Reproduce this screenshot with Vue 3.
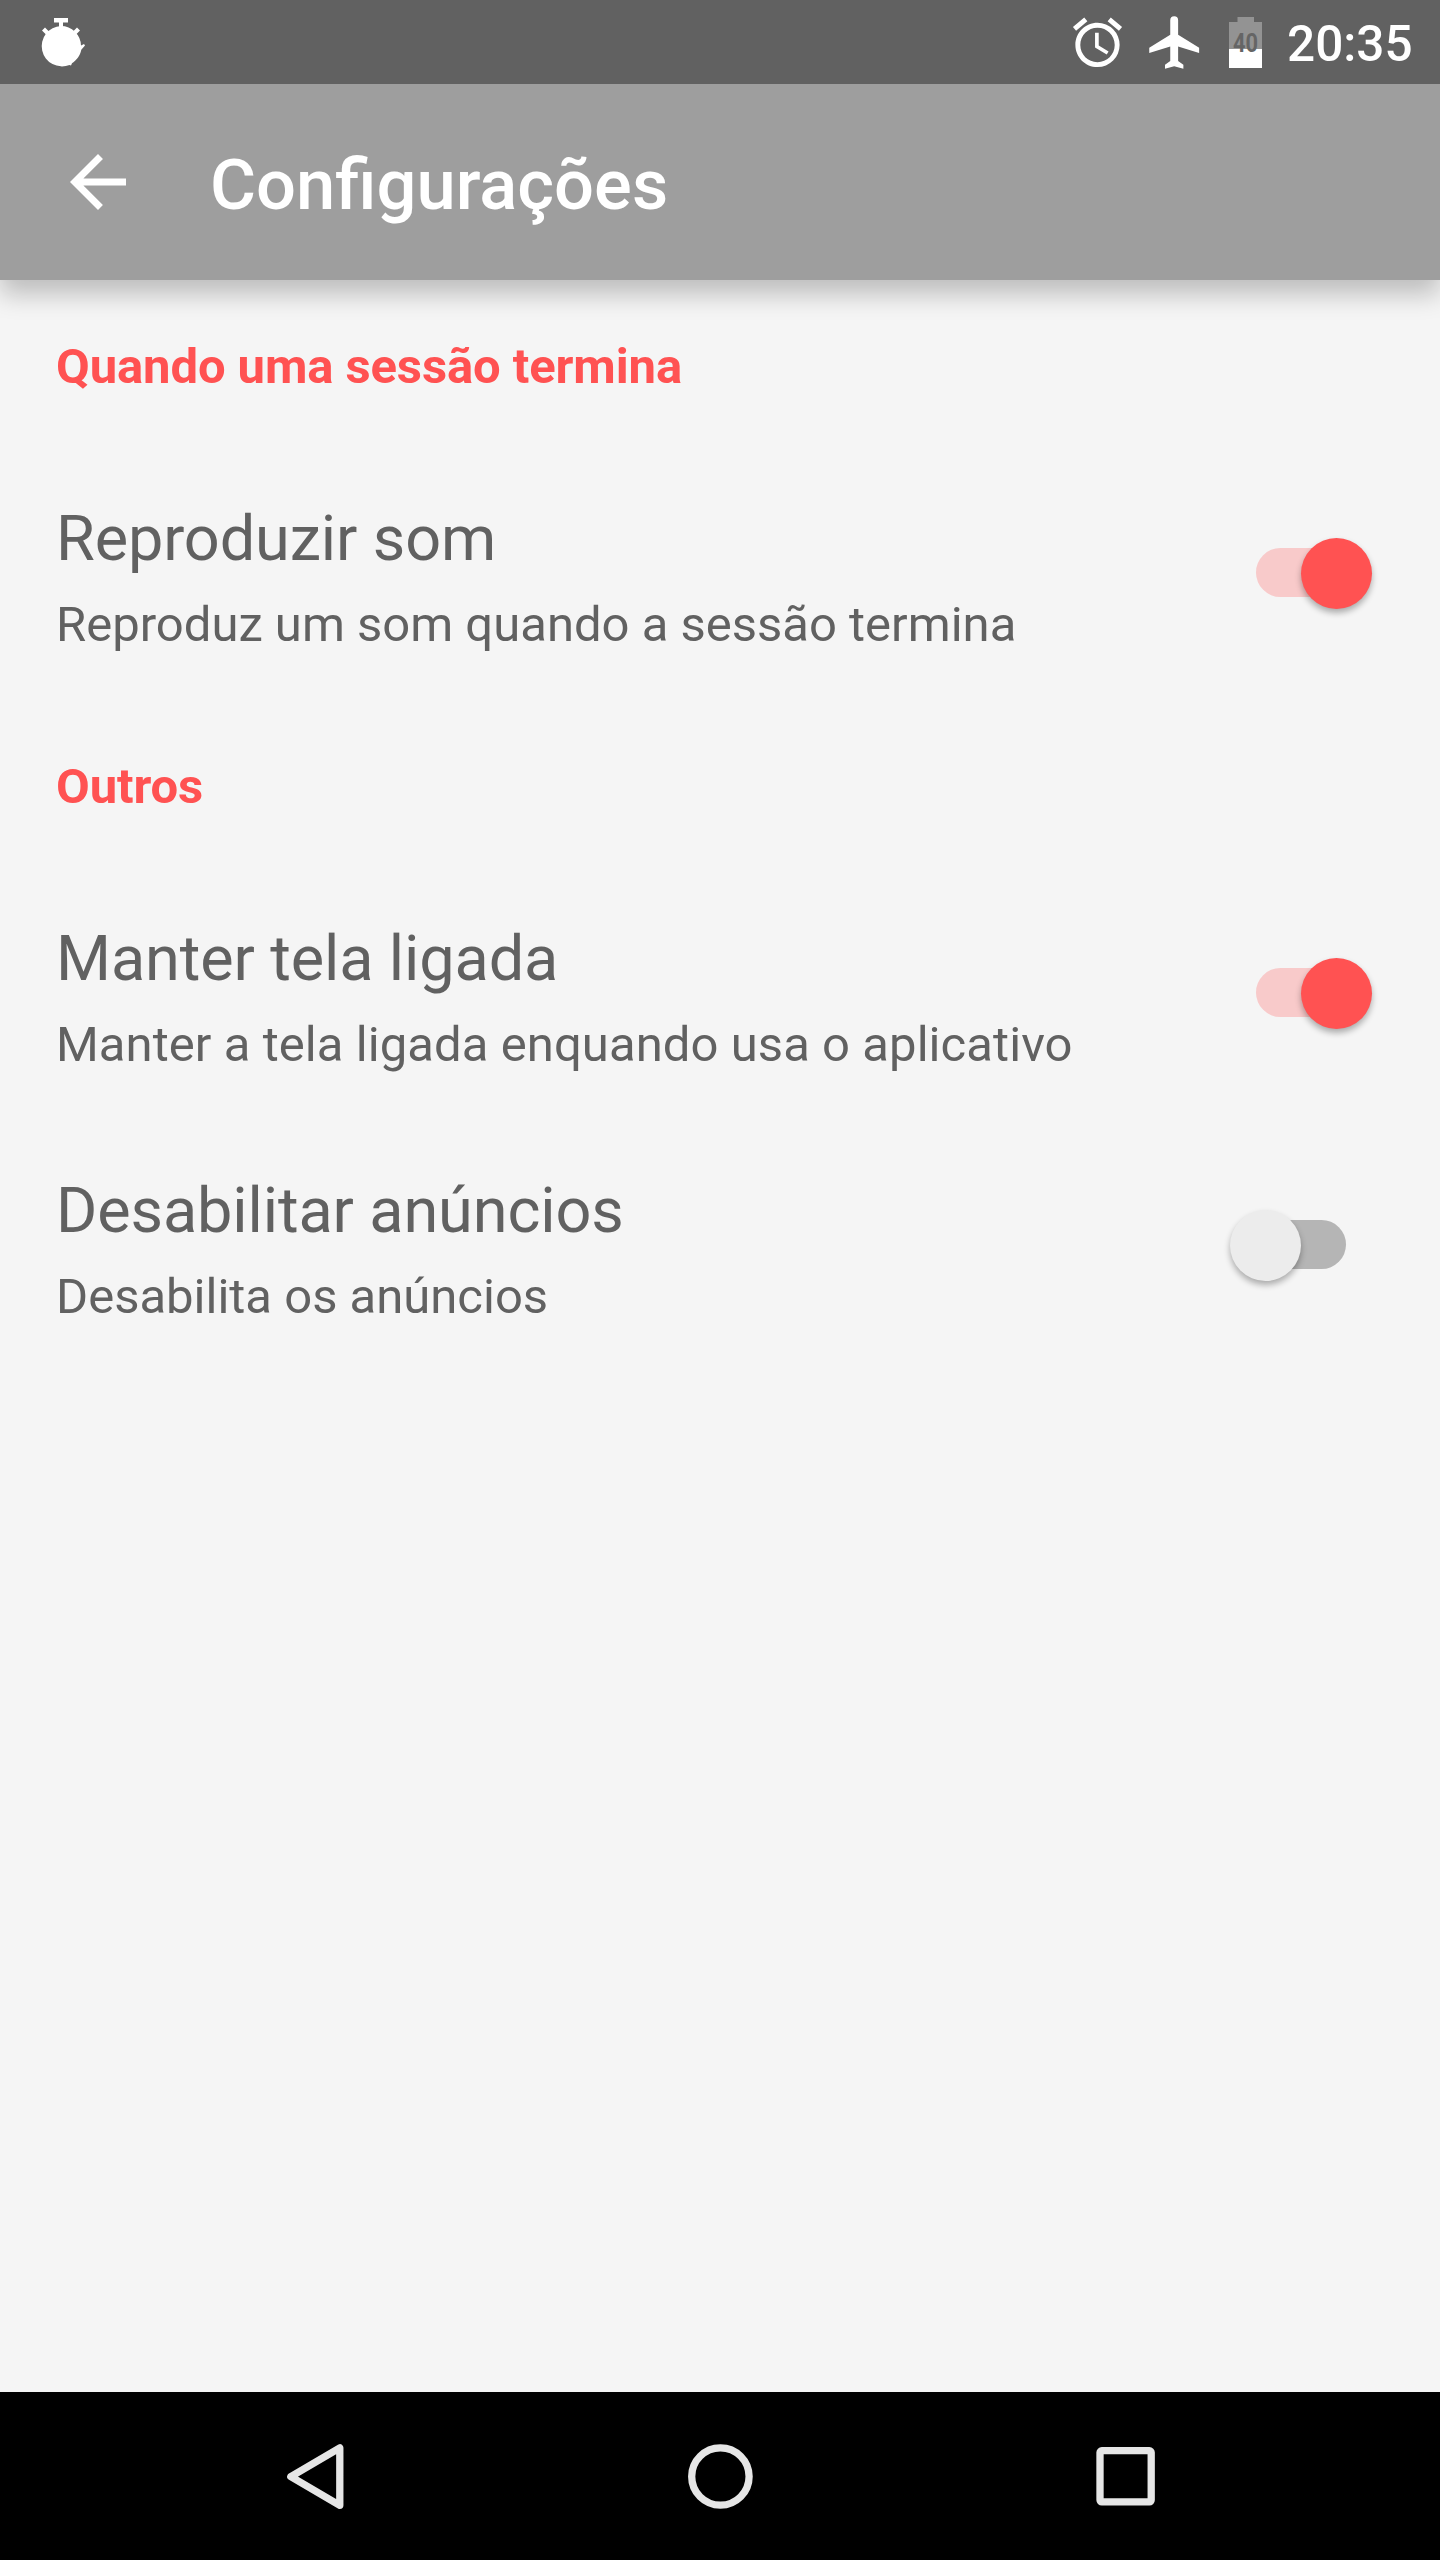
<script setup>
const groups = [
  { title: 'Quando uma sessão termina', items: [
    { name: 'Reproduzir som', note: 'Reproduz um som quando a sessão termina', on: true }] },
  { title: 'Outros', items: [
    { name: 'Manter tela ligada', note: 'Manter a tela ligada enquando usa o aplicativo', on: true, wide: true },
    { name: 'Desabilitar anúncios', note: 'Desabilita os anúncios', on: false }] }
]
</script>

<template>
  <div class="screen">
    <div class="status">
      <svg class="stopwatch" width="60" height="84" viewBox="32 0 60 84" fill="#fff">
        <path d="M54 18h14v4.500h-5V27h-4v-4.500h-5zM42 30.500l3-3 5 5-3 3zM80 30.500l-3-3-5 5 3 3z"/>
        <path d="M61 26a20 20 0 0 1 20 19.500l3-1.500 1 1.500-3.700 4.200c-1.300 6-4.300 10-9.300 13.600l-1 2.200-1.500-.6A20.200 20.200 0 1 1 61 26z"/>
      </svg>
      <span class="spacer"></span>
      <svg width="59" height="59" viewBox="0 0 24 24" fill="#fff"><path d="M22 5.720l-4.600-3.860-1.290 1.530 4.600 3.860L22 5.720zM7.880 3.390L6.600 1.860 2 5.710l1.290 1.530 4.590-3.850zM12.500 8H11v6l4.750 2.850.75-1.230-4-2.370V8zM12 4c-4.970 0-9 4.030-9 9s4.020 9 9 9a9 9 0 0 0 0-18zm0 16c-3.870 0-7-3.130-7-7s3.130-7 7-7 7 3.130 7 7-3.130 7-7 7z"/></svg>
      <svg class="plane" width="63" height="63" viewBox="0 0 24 24" fill="#fff"><path d="M21 16v-2l-8-5V3.500a1.500 1.500 0 0 0-3 0V9l-8 5v2l8-2.500V19l-2 1.500V22l3.500-1 3.500 1v-1.500L13 19v-5.500l8 2.500z"/></svg>
      <svg class="battery" width="33" height="51" viewBox="0 0 33 51"><path fill="#939393" d="M8.500 0H25v5h8v46H0V5h8.500z"/><path fill="#fff" d="M0 32h33v19H0z"/><text x="4" y="34.500" textLength="25" lengthAdjust="spacingAndGlyphs">40</text></svg>
      <span class="clock">20:35</span>
    </div>
    <header class="bar">
      <svg width="84" height="84" viewBox="0 0 24 24" fill="#fff"><path d="M20 11H7.830l5.590-5.590L12 4l-8 8 8 8 1.410-1.410L7.830 13H20v-2z"/></svg>
      <h1>Configurações</h1>
    </header>
    <main>
      <section v-for="g in groups" :key="g.title">
        <h2>{{ g.title }}</h2>
        <div v-for="i in g.items" :key="i.name" class="row">
          <div><div class="name">{{ i.name }}</div><div class="note" :class="{ wide: i.wide }">{{ i.note }}</div></div>
          <div class="switch" :class="{ on: i.on }"><span class="thumb"></span></div>
        </div>
      </section>
    </main>
    <nav>
      <svg width="1440" height="168" viewBox="0 0 1440 168" fill="none" stroke="#e6e6e6" stroke-width="7.300">
        <path stroke-linejoin="round" d="M339.800 55.900v57.400l-49-28.700z"/>
        <circle cx="720.400" cy="84.500" r="28.700"/>
        <rect x="1100" y="58.700" width="51.200" height="51.200" rx="1.800"/>
      </svg>
    </nav>
  </div>
</template>

<style>
body { margin: 0; }
</style>
<style scoped>
.screen { width: 1440px; height: 2560px; display: flex; flex-direction: column; background: #f5f5f5; font-family: Roboto, sans-serif; color: #616161; }
.status { position: relative; z-index: 1; height: 84px; background: #616161; display: flex; align-items: center; color: #fff; flex: none; }
.stopwatch { margin-left: 32px; }
.spacer { flex: 1; }
.plane { margin: 0 22px 0 17px; }
.battery text { font: 700 26px Roboto, sans-serif; fill: #656565; }
.clock { width: 125px; flex: none; font-size: 49.500px; line-height: 57px; font-weight: 500; margin: 4px 28px 0 25px; }
.bar { height: 196px; background: #9e9e9e; box-shadow: 0 14px 24px rgba(0,0,0,.23); display: flex; align-items: center; color: #fff; flex: none; padding-left: 56px; }
h1 { margin: 6px 0 0 70px; font-size: 70.500px; line-height: 82px; font-weight: 500; }
main { flex: 1; padding: 28px 56px 0; }
section { margin-bottom: 52px; }
h2 { margin: 0; padding: 30px 0 29px; line-height: 57px; font-size: 49px; font-weight: 700; letter-spacing: -.11px; color: #ff5252; }
.row { height: 252px; display: flex; justify-content: space-between; }
.name { font-size: 63px; line-height: 75px; margin-top: 77px; letter-spacing: -.12px; }
.note { font-size: 49px; line-height: 57px; margin-top: 20px; }
.note.wide { letter-spacing: .07px; }
.switch { position: relative; width: 90px; height: 49px; border-radius: 25px; background: #b5b5b5; margin: 124px 38px 0 0; }
.switch.on { background: #f8caca; }
.thumb { position: absolute; width: 71px; height: 71px; border-radius: 50%; left: -26px; top: -10px; background: #ececec; box-shadow: 0 4px 6px rgba(0,0,0,.3); }
.on .thumb { left: 45px; background: #ff5252; }
nav { height: 168px; background: #000; flex: none; }
nav svg { display: block; }
</style>
